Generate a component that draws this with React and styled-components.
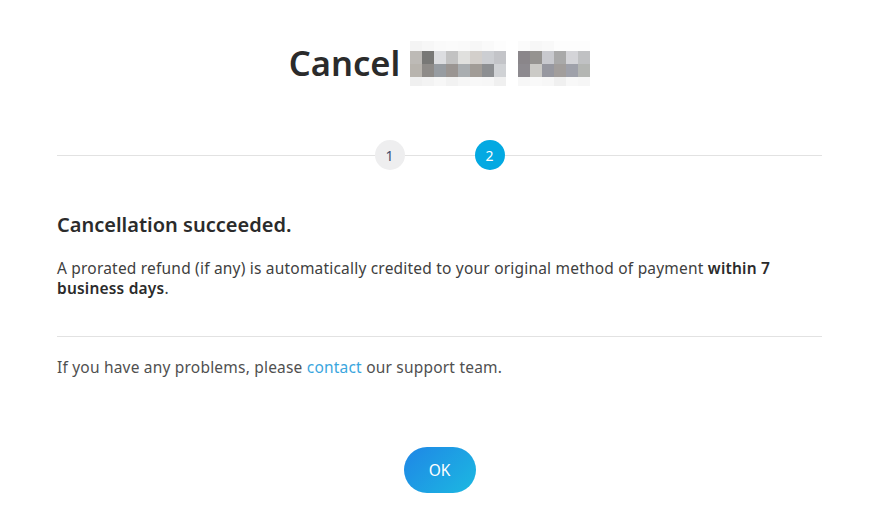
import React from 'react';
import styled, { createGlobalStyle } from 'styled-components';

const GlobalStyle = createGlobalStyle`
  html, body {
    margin: 0;
    background: #fff;
  }
  body {
    font-family: "Noto Sans", Lato, sans-serif;
    color: #333;
  }
`

const Page = styled.div`
  width: 765px;
  margin-left: 57px;
  padding-top: 38px;
`

const Title = styled.h1`
  margin: 0;
  display: flex;
  justify-content: center;
  align-items: center;
  gap: 10px;
  font-size: 34.5px;
  line-height: 50px;
  font-weight: 600;
  color: #2b2b2b;
`

const Stepper = styled.div`
  margin-top: 52px;
  display: flex;
  justify-content: center;
  gap: 70px;
  background: linear-gradient(#e2e2e2, #e2e2e2) center / 100% 1px no-repeat;
`

const Step = styled.div`
  width: 30px;
  height: 30px;
  border-radius: 50%;
  display: flex;
  align-items: center;
  justify-content: center;
  font-size: 14px;
  background: ${props => (props.active ? '#03a9e2' : '#eeeeef')};
  color: ${props => (props.active ? '#fff' : '#3e4d6c')};
`

const Heading = styled.h2`
  margin: 42px 0 0;
  font-size: 20px;
  line-height: 26px;
  font-weight: 600;
  color: #2b2b2b;
`

const Text = styled.p`
  margin: 20px 0 0;
  font-size: 15.5px;
  letter-spacing: 0.2px;
  line-height: 20px;
  color: #404040;

  b {
    font-weight: 600;
    color: #2b2b2b;
  }
`

const Divider = styled.hr`
  margin: 38px 0 0;
  border: 0;
  border-top: 1px solid #e2e2e2;
`

const Footer = styled.p`
  margin: 20px 0 0;
  font-size: 15.5px;
  letter-spacing: 0.2px;
  line-height: 20px;
  color: #505050;
`

const Link = styled.a`
  color: #3aa6de;
  text-decoration: none;
`

const Actions = styled.div`
  margin-top: 70px;
  display: flex;
  justify-content: center;
`

const OkButton = styled.button`
  width: 72px;
  height: 46px;
  border: 0;
  border-radius: 23px;
  background: linear-gradient(135deg, #1f86e6 0%, #1cb9e1 100%);
  color: #fff;
  font-family: inherit;
  font-size: 15.5px;
  cursor: pointer;
`

// pixelated (censored) product name, cell colours sampled from the screenshot
const words = [
  [
    ['#f4f4f4', '#f7f7f7', '#fafafa', '#fbfbfb', '#fafafa', '#f7f7f7', '#fafafa', '#fdfdfd'],
    ['#bdbab6', '#787876', '#dcdde0', '#c2c2c2', '#e0e0de', '#d3cfcb', '#ccced2', '#c3c4c8'],
    ['#b8b4ae', '#8e8b88', '#979ca1', '#9a9592', '#a9adb0', '#a19c97', '#8d8f92', '#d0d2d5'],
    ['#f0f0f0', '#f3f3f3', '#f7f7f7', '#f2f2f2', '#f6f6f6', '#f8f8f8', '#f7f7f7', '#f0f0f0'],
  ],
  [
    ['#fbfbfb', '#f7f7f7', '#f9f9f9', '#fdfdfd', '#fdfdfd', '#fdfdfd'],
    ['#8a868a', '#959390', '#c8c9ce', '#a9a9a9', '#d4d4d8', '#c0c1c3'],
    ['#8d8a8f', '#cbcac6', '#9798a0', '#a29e9c', '#9fa1aa', '#b4b6b3'],
    ['#f7f7f7', '#f9f9f9', '#f7f7f7', '#f0f0f0', '#f8f8f8', '#f6f6f6'],
  ],
]

const rowHeights = [10, 13, 13, 9]

function Mosaic({ cells }) {
  const cols = cells[0].length
  let y = 0
  return (
    <svg width={cols * 12} height={45} viewBox={`0 0 ${cols * 12} 45`} aria-label="hidden name">
      {cells.map((row, r) => {
        const top = y
        y += rowHeights[r]
        return row.map((c, i) => (
          <rect key={`${r}-${i}`} x={i * 12} y={top} width={12} height={rowHeights[r]} fill={c} />
        ))
      })}
    </svg>
  )
}

const Hidden = styled.span`
  display: flex;
  gap: 12px;
`

export default function App() {
  return (
    <>
      <GlobalStyle />
      <Page>
        <Title>
          Cancel
          <Hidden>
            {words.map((w, i) => <Mosaic key={i} cells={w} />)}
          </Hidden>
        </Title>
        <Stepper>
          <Step>1</Step>
          <Step active>2</Step>
        </Stepper>
        <Heading>Cancellation succeeded.</Heading>
        <Text>
          A prorated refund (if any) is automatically credited to your original method of payment <b>within 7 business days</b>.
        </Text>
        <Divider />
        <Footer>
          If you have any problems, please <Link href="#">contact</Link> our support team.
        </Footer>
        <Actions>
          <OkButton>OK</OkButton>
        </Actions>
      </Page>
    </>
  )
}
